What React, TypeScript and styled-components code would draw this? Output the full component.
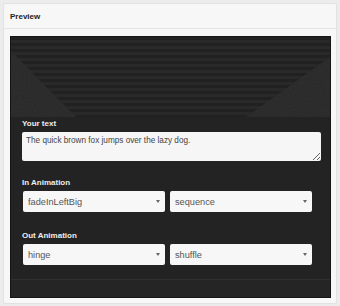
import React from "react";
import styled, { createGlobalStyle } from "styled-components";

const Global = createGlobalStyle`
  html, body { margin: 0; padding: 0; background: #ececec; }
  body { font-family: "Liberation Sans", Arial, sans-serif; }
  * { box-sizing: border-box; }
`;

const Page = styled.div`
  padding: 3px 3px 2px 3px;
`;

const Panel = styled.section`
  width: 334px;
  background: #f7f7f7;
  border: 1px solid #e2e2e2;
  border-radius: 2px;
`;

const PanelHeader = styled.header`
  height: 25px;
  display: flex;
  align-items: center;
  padding-left: 6px;
  border-bottom: 1px solid #e4e4e4;
  font-size: 8px;
  font-weight: 700;
  color: #222;
`;

const PanelBody = styled.div`
  padding: 7px 5px 5px 6px;
`;

const Preview = styled.div`
  width: 321px;
  background: #232323;
  border: 1px solid #151515;
  display: flex;
  flex-direction: column;
`;

const Stage = styled.div`
  height: 80px;
  display: block;
  svg { display: block; }
`;

const Form = styled.div`
  padding: 2px 9px 14px 11px;
  display: flex;
  flex-direction: column;
`;

const Label = styled.label<{ $top?: number }>`
  display: block;
  color: #eeeeee;
  font-size: 8px;
  font-weight: 700;
  line-height: 10px;
  margin-top: ${(p) => p.$top ?? 0}px;
  margin-bottom: 3px;
`;

const TextArea = styled.textarea`
  width: 299px;
  height: 29px;
  background: #f6f6f6;
  border: none;
  border-radius: 2px;
  padding: 4px 4px;
  font-family: "Liberation Sans", Arial, sans-serif;
  font-size: 8.2px;
  color: #444;
  resize: both;
  outline: none;
  display: block;
`;

const SelectRow = styled.div`
  display: flex;
  gap: 5px;
  padding-left: 1px;
`;

const SelectWrap = styled.div`
  position: relative;
  width: 142px;
  height: 21px;
`;

const Select = styled.select`
  appearance: none;
  -webkit-appearance: none;
  width: 100%;
  height: 100%;
  background: #f7f7f7;
  border: none;
  border-radius: 2px;
  padding: 0 12px 0 5px;
  font-family: "Liberation Sans", Arial, sans-serif;
  font-size: 9.2px;
  color: #555;
  outline: none;
  display: block;
`;

const Caret = styled.span`
  position: absolute;
  right: 5px;
  top: 9px;
  width: 0;
  height: 0;
  border-left: 2px solid transparent;
  border-right: 2px solid transparent;
  border-top: 3px solid #666;
  pointer-events: none;
`;

const BottomBar = styled.div`
  height: 18px;
  background: #252525;
  border-top: 1px solid #303030;
`;

const StripeStage: React.FC = () => (
  <svg width="319" height="80" viewBox="0 0 319 80">
    <defs>
      <pattern id="stripes" width="6" height="6" patternUnits="userSpaceOnUse">
        <rect width="6" height="3" fill="#212121" />
        <rect y="3" width="6" height="3" fill="#292929" />
      </pattern>
      <filter id="grain">
        <feTurbulence type="fractalNoise" baseFrequency="0.9" numOctaves="2" seed="3" />
        <feColorMatrix type="matrix" values="0 0 0 0 0.25  0 0 0 0 0.25  0 0 0 0 0.25  0 0 0 0.12 0" />
        <feComposite in2="SourceGraphic" operator="in" />
      </filter>
    </defs>
    <rect width="319" height="80" fill="url(#stripes)" />
    <polygon points="0,14 65,80 0,80" fill="#262626" />
    <polygon points="319,20 319,80 235,80" fill="#262626" />
    <polygon points="0,14 65,80 0,80" fill="#fff" filter="url(#grain)" />
    <polygon points="319,20 319,80 235,80" fill="#fff" filter="url(#grain)" />
  </svg>
);

const AnimSelect: React.FC<{ value: string; options: string[] }> = ({ value, options }) => (
  <SelectWrap>
    <Select defaultValue={value}>
      {options.map((o) => (
        <option key={o} value={o}>
          {o}
        </option>
      ))}
    </Select>
    <Caret />
  </SelectWrap>
);

export default function App() {
  return (
    <>
      <Global />
      <Page>
        <Panel>
          <PanelHeader>Preview</PanelHeader>
          <PanelBody>
            <Preview>
              <Stage>
                <StripeStage />
              </Stage>
              <Form>
                <Label>Your text</Label>
                <TextArea defaultValue="The quick brown fox jumps over the lazy dog." />
                <Label $top={17}>In Animation</Label>
                <SelectRow>
                  <AnimSelect value="fadeInLeftBig" options={["fadeInLeftBig", "fadeIn", "bounceIn"]} />
                  <AnimSelect value="sequence" options={["sequence", "reverse", "sync", "shuffle"]} />
                </SelectRow>
                <Label $top={19}>Out Animation</Label>
                <SelectRow>
                  <AnimSelect value="hinge" options={["hinge", "fadeOut", "bounceOut"]} />
                  <AnimSelect value="shuffle" options={["shuffle", "sequence", "reverse", "sync"]} />
                </SelectRow>
              </Form>
              <BottomBar />
            </Preview>
          </PanelBody>
        </Panel>
      </Page>
    </>
  );
}
